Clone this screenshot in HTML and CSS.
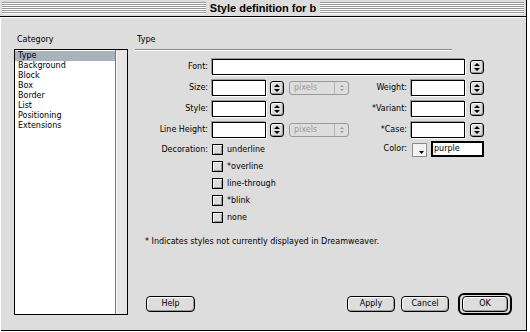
FILE: index.html
```html
<!DOCTYPE html>
<html>
<head>
<meta charset="utf-8">
<title>Style definition for b</title>
<link rel="stylesheet" href="styles.css">
</head>
<body>
<div class="window">
  <div class="titlebar">
    <div class="stripes"><span class="title">Style definition for b</span></div>
  </div>
  <div class="content">
    <div class="sidebar">
      <div class="head">Category</div>
      <div class="listbox">
        <ul class="list">
          <li class="item selected">Type</li>
          <li class="item">Background</li>
          <li class="item">Block</li>
          <li class="item">Box</li>
          <li class="item">Border</li>
          <li class="item">List</li>
          <li class="item">Positioning</li>
          <li class="item">Extensions</li>
        </ul>
        <div class="scrollbar"></div>
      </div>
    </div>
    <div class="panel">
      <div class="head panel-head">Type</div>
      <div class="rule"></div>
      <div class="form">
        <span class="lbl">Font:</span>
        <span class="field wide"></span>
        <span class="spin"><svg width="8" height="10" viewBox="0 0 8 10"><path d="M1 4 L4 1 L7 4 Z M1 6 L4 9 L7 6 Z" fill="#000"/></svg></span>

        <span class="lbl">Size:</span>
        <span class="field short"></span>
        <span class="spin"><svg width="8" height="10" viewBox="0 0 8 10"><path d="M1 4 L4 1 L7 4 Z M1 6 L4 9 L7 6 Z" fill="#000"/></svg></span>
        <span class="select"><span class="sel-text">pixels</span><span class="sel-arrows"><svg width="6" height="8" viewBox="0 0 6 8"><path d="M1 3 L3 1 L5 3 Z M1 5 L3 7 L5 5 Z" fill="#999"/></svg></span></span>
        <span class="lbl">Weight:</span>
        <span class="field short"></span>
        <span class="spin"><svg width="8" height="10" viewBox="0 0 8 10"><path d="M1 4 L4 1 L7 4 Z M1 6 L4 9 L7 6 Z" fill="#000"/></svg></span>

        <span class="lbl">Style:</span>
        <span class="field short"></span>
        <span class="spin"><svg width="8" height="10" viewBox="0 0 8 10"><path d="M1 4 L4 1 L7 4 Z M1 6 L4 9 L7 6 Z" fill="#000"/></svg></span>
        <span class="empty"></span>
        <span class="lbl">*Variant:</span>
        <span class="field short"></span>
        <span class="spin"><svg width="8" height="10" viewBox="0 0 8 10"><path d="M1 4 L4 1 L7 4 Z M1 6 L4 9 L7 6 Z" fill="#000"/></svg></span>

        <span class="lbl">Line Height:</span>
        <span class="field short"></span>
        <span class="spin"><svg width="8" height="10" viewBox="0 0 8 10"><path d="M1 4 L4 1 L7 4 Z M1 6 L4 9 L7 6 Z" fill="#000"/></svg></span>
        <span class="select"><span class="sel-text">pixels</span><span class="sel-arrows"><svg width="6" height="8" viewBox="0 0 6 8"><path d="M1 3 L3 1 L5 3 Z M1 5 L3 7 L5 5 Z" fill="#999"/></svg></span></span>
        <span class="lbl">*Case:</span>
        <span class="field short"></span>
        <span class="spin"><svg width="8" height="10" viewBox="0 0 8 10"><path d="M1 4 L4 1 L7 4 Z M1 6 L4 9 L7 6 Z" fill="#000"/></svg></span>

        <span class="lbl dec-lbl">Decoration:</span>
        <div class="checks">
          <div class="check"><span class="box"></span>underline</div>
          <div class="check"><span class="box"></span>*overline</div>
          <div class="check"><span class="box"></span>line-through</div>
          <div class="check"><span class="box"></span>*blink</div>
          <div class="check"><span class="box"></span>none</div>
        </div>
        <span class="lbl">Color:</span>
        <div class="color">
          <span class="swatch"><svg width="5" height="3" viewBox="0 0 5 3"><path d="M0 0 L5 0 L2.5 3 Z" fill="#000"/></svg></span>
          <span class="color-input">purple</span>
        </div>
      </div>
      <div class="note">* Indicates styles not currently displayed in Dreamweaver.</div>
      <div class="buttons">
        <span class="btn help">Help</span>
        <span class="btn apply">Apply</span>
        <span class="btn cancel">Cancel</span>
        <span class="ok-ring"><span class="btn ok">OK</span></span>
      </div>
    </div>
  </div>
</div>
</body>
</html>
```
FILE: styles.css
```css
html, body {
  margin: 0;
  padding: 0;
  background: #ffffff;
  font-family: "DejaVu Sans", "Liberation Sans", sans-serif;
  font-size: 8px;
  color: #000;
}

.window {
  width: 527px;
  height: 331px;
  box-sizing: border-box;
  border-right: 1px solid #000;
  border-bottom: 1px solid #000;
  background: #dddddd;
  display: flex;
  flex-direction: column;
}

.titlebar {
  height: 17px;
  box-sizing: border-box;
  border-bottom: 1px solid #000;
  padding: 2px 2px 2px 2px;
  background: #dddddd;
}

.stripes {
  height: 12px;
  background: repeating-linear-gradient(to bottom, #999999 0 1px, #ffffff 1px 2px);
  display: flex;
  justify-content: center;
  align-items: center;
}

.title {
  background: #dddddd;
  padding: 0 4px;
  font-family: "Liberation Sans", Arial, sans-serif;
  font-weight: bold;
  font-size: 11px;
  line-height: 12px;
}

.content {
  flex: 1;
  display: flex;
  padding: 17px 14px 17px 14px;
  box-shadow: inset 1px 1px 0 #ffffff;
}

.head {
  line-height: 11px;
  height: 11px;
}

.sidebar {
  width: 114px;
  display: flex;
  flex-direction: column;
}

.sidebar .head {
  padding-left: 3px;
}

.listbox {
  margin-top: 4px;
  height: 266px;
  box-sizing: border-box;
  border: 1px solid #000;
  background: #ffffff;
  display: flex;
}

.list {
  flex: 1;
  margin: 0;
  padding: 1px 0 0 0;
  list-style: none;
}

.item {
  height: 10px;
  line-height: 10px;
  padding-left: 3px;
}

.item.selected {
  background: #a8b3bb;
}

.scrollbar {
  width: 11px;
  border-left: 1px solid #777;
  background: #e6e6e6;
  box-shadow: inset 1px 0 0 #f6f6f6;
}

.panel {
  flex: 1;
  margin-left: 7px;
  display: flex;
  flex-direction: column;
}

.panel-head {
  padding-left: 2px;
  margin-bottom: 4px;
}

.rule {
  width: 317px;
  height: 1px;
  background: #8a8a8a;
  border-bottom: 1px solid #ffffff;
  margin-bottom: 8px;
}

.form {
  display: grid;
  grid-template-columns: 77px 58px 19px 60px 62px 59px 14px;
  grid-template-rows: 16px 16px 16px 14px auto;
  row-gap: 5px;
  align-items: start;
}

.lbl {
  line-height: 16px;
  text-align: right;
  padding-right: 4px;
  white-space: nowrap;
}

.dec-lbl {
  line-height: 17px;
}

.field {
  display: block;
  height: 16px;
  box-sizing: border-box;
  border: 1px solid #000;
  background: #ffffff;
  box-shadow: -1px -1px 0 #9a9a9a, 1px 1px 0 #ffffff;
}

.field.short {
  width: 54px;
}

.field.wide {
  width: 253px;
  grid-column: span 5;
}

.spin {
  width: 14px;
  height: 14px;
  margin-top: 1px;
  box-sizing: border-box;
  border: 1px solid #000;
  border-radius: 3px;
  background: #dddddd;
  box-shadow: inset 1px 1px 0 #ffffff, inset -1px -1px 0 #999999;
  display: flex;
  align-items: center;
  justify-content: center;
}

.select {
  width: 60px;
  height: 14px;
  margin-top: 1px;
  box-sizing: border-box;
  border: 1px solid #9a9a9a;
  border-radius: 3px;
  color: #9a9a9a;
  display: flex;
  align-items: center;
}

.sel-text {
  flex: 1;
  padding-left: 4px;
  line-height: 12px;
}

.sel-arrows {
  width: 13px;
  height: 12px;
  border-left: 1px solid #b5b5b5;
  display: flex;
  align-items: center;
  justify-content: center;
}

.checks {
  grid-column: span 3;
  display: flex;
  flex-direction: column;
}

.check {
  height: 17px;
  display: flex;
  align-items: center;
}

.box {
  width: 11px;
  height: 11px;
  box-sizing: border-box;
  border: 1px solid #000;
  background: #dddddd;
  box-shadow: inset 1px 1px 0 #ffffff, inset -1px -1px 0 #999999;
  margin-right: 4px;
}

.color {
  grid-column: span 2;
  display: flex;
  align-items: flex-start;
}

.swatch {
  width: 16px;
  height: 14px;
  margin: 2px 0 0 1px;
  box-sizing: border-box;
  border: 1px solid #8a8a8a;
  background: #f2f2f2;
  box-shadow: inset -1px -1px 0 #ffffff;
  display: flex;
  align-items: flex-end;
  justify-content: flex-end;
  padding: 0 2px 2px 0;
}

.color-input {
  width: 53px;
  height: 16px;
  margin-left: 4px;
  box-sizing: border-box;
  border: 2px solid #000;
  background: #ffffff;
  padding-left: 1px;
  line-height: 12px;
  flex-shrink: 0;
}

.note {
  margin-top: 10px;
  padding-left: 10px;
  line-height: 11px;
}

.buttons {
  margin-top: auto;
  height: 22px;
  display: flex;
  align-items: center;
}

.btn {
  width: 48px;
  height: 16px;
  box-sizing: border-box;
  border: 1px solid #000;
  border-radius: 4px;
  background: #dddddd;
  box-shadow: inset 1px 1px 0 #ffffff, inset -1px -1px 0 #999999;
  text-align: center;
  line-height: 14px;
}

.help {
  width: 49px;
  margin-left: 11px;
}

.apply {
  margin-left: auto;
}

.cancel {
  margin-left: 6px;
}

.ok-ring {
  margin-left: 9px;
  border: 2px solid #000;
  border-radius: 6px;
  padding: 1px 2px;
  display: flex;
}

.ok {
  width: 46px;
}
```
